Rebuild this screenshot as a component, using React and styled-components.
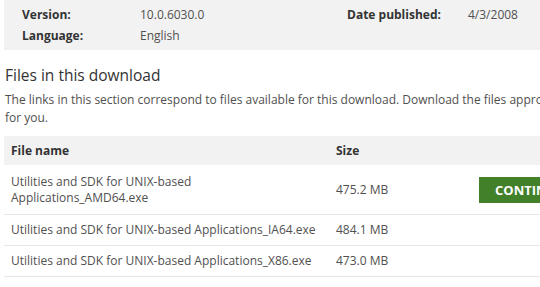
import React from 'react'
import styled, { createGlobalStyle } from 'styled-components'

const GlobalStyle = createGlobalStyle`
  body {
    margin: 0;
    background: #fff;
    font-family: "Open Sans", "Liberation Sans", sans-serif;
    color: #505050;
    overflow: hidden;
  }
`

const Page = styled.div`
  width: 540px;
  height: 287px;
  overflow: hidden;
  padding-left: 4px;
  box-sizing: border-box;
`

const Inner = styled.div`
  width: 620px;
`

const InfoBox = styled.div`
  background: #f2f2f2;
  height: 50px;
  padding: 4px 0 0 18px;
  box-sizing: border-box;
  display: grid;
  grid-template-columns: 118px 207px 121px 1fr;
  grid-auto-rows: 21px;
  align-items: center;
`

const Label = styled.div`
  font-weight: 700;
  font-size: 12px;
  color: #333;
`

const Value = styled.div`
  font-size: 12px;
  color: #505050;
`

const Heading = styled.h2`
  margin: 14px 0 0 1px;
  font-size: 15.5px;
  font-weight: 400;
  color: #333;
  line-height: 22px;
`

const Intro = styled.p`
  margin: 5px 0 0 1px;
  font-size: 12px;
  line-height: 17.5px;
  color: #505050;
  width: 590px;
`

const Table = styled.div`
  margin-top: 10px;
`

const HeadRow = styled.div`
  display: grid;
  grid-template-columns: 325px 143px 1fr;
  background: #f2f2f2;
  height: 29px;
  align-items: center;
`

const HeadCell = styled.div`
  font-weight: 700;
  font-size: 12px;
  color: #333;
  padding-left: 7px;
`

const Row = styled.div`
  display: grid;
  grid-template-columns: 325px 143px 1fr;
  align-items: center;
  border-bottom: 1px solid #e6e6e6;
  min-height: ${({ $tall }) => ($tall ? '50px' : '31px')};
  box-sizing: border-box;
`

const Cell = styled.div`
  font-size: 12px;
  line-height: 16px;
  color: #505050;
  padding-left: 7px;
  max-width: ${({ $narrow }) => ($narrow ? '200px' : 'none')};
`

const Continue = styled.button`
  margin-left: 7px;
  width: 110px;
  height: 26px;
  border: none;
  background: #43802a;
  color: #fff;
  font-family: inherit;
  font-weight: 700;
  font-size: 13px;
  text-align: left;
  padding-left: 16px;
`

const files = [
  { name: 'Utilities and SDK for UNIX-based Applications_AMD64.exe', size: '475.2 MB', tall: true },
  { name: 'Utilities and SDK for UNIX-based Applications_IA64.exe', size: '484.1 MB' },
  { name: 'Utilities and SDK for UNIX-based Applications_X86.exe', size: '473.0 MB' },
]

export default function App() {
  return (
    <Page>
      <GlobalStyle />
      <Inner>
        <InfoBox>
          <Label>Version:</Label>
          <Value>10.0.6030.0</Value>
          <Label>Date published:</Label>
          <Value>4/3/2008</Value>
          <Label>Language:</Label>
          <Value>English</Value>
        </InfoBox>
        <Heading>Files in this download</Heading>
        <Intro>
          The links in this section correspond to files available for this download. Download the files appropriate
          for you.
        </Intro>
        <Table>
          <HeadRow>
            <HeadCell>File name</HeadCell>
            <HeadCell>Size</HeadCell>
            <div />
          </HeadRow>
          {files.map((f, i) => (
            <Row key={f.name} $tall={f.tall}>
              <Cell $narrow={f.tall}>{f.name}</Cell>
              <Cell>{f.size}</Cell>
              <div>{i === 0 && <Continue>CONTINUE</Continue>}</div>
            </Row>
          ))}
        </Table>
      </Inner>
    </Page>
  )
}
